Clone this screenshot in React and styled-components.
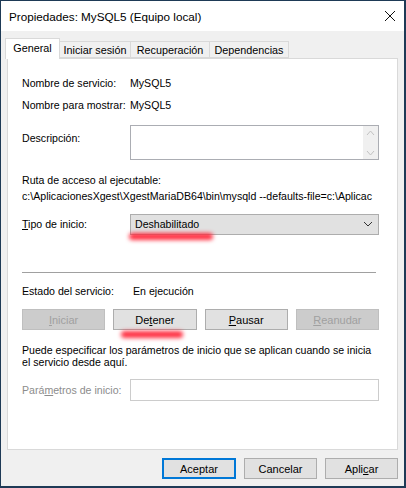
import React from "react";
import styled, { createGlobalStyle } from "styled-components";

const Global = createGlobalStyle`
  html, body { margin: 0; padding: 0; background: #1e3a56; }
  body { font-family: "Liberation Sans", Arial, sans-serif; font-size: 10.6px; color: #000; }
`;

const Window = styled.div`
  position: relative;
  width: 406px;
  height: 488px;
  box-sizing: border-box;
  border: 1px solid #1e3a56;
  border-right-width: 2px;
  border-bottom-width: 2px;
  background: #f0f0f0;
  display: flex;
  flex-direction: column;
`;

const TitleBar = styled.div`
  height: 30px;
  flex: 0 0 30px;
  background: #fff;
  display: flex;
  align-items: center;
  justify-content: space-between;
  padding: 0 8px 0 8px;
  font-size: 11.7px;
`;

const CloseIcon = () => (
  <svg width="12" height="12" viewBox="0 0 12 12">
    <path d="M1 1 L11 11 M11 1 L1 11" stroke="#111" strokeWidth="1" />
  </svg>
);

const Body = styled.div`
  flex: 1;
  display: flex;
  flex-direction: column;
  padding: 7px 6px 0 6px;
`;

const TabBar = styled.div`
  display: flex;
  align-items: flex-end;
  height: 20px;
  position: relative;
  z-index: 2;
`;

const Tab = styled.div`
  box-sizing: border-box;
  width: ${(p) => p.$w}px;
  height: ${(p) => (p.$active ? 21 : 17)}px;
  margin: ${(p) => (p.$active ? "0 0 -1px -2px" : "0 0 0 -1px")};
  border: 1px solid #d9d9d9;
  border-bottom: ${(p) => (p.$active ? "none" : "1px solid #d9d9d9")};
  background: ${(p) => (p.$active ? "#fff" : "#f0f0f0")};
  display: flex;
  align-items: center;
  justify-content: center;
  font-size: 10.8px;
  white-space: nowrap;
  padding-bottom: ${(p) => (p.$active ? 2 : 0)}px;
`;

const Panel = styled.div`
  box-sizing: border-box;
  height: 392px;
  background: #fff;
  border: 1px solid #d9d9d9;
  padding: 13px 18px 0 14px;
  display: flex;
  flex-direction: column;
  position: relative;
  z-index: 1;
`;

const InfoRow = styled.div`
  display: grid;
  grid-template-columns: 108px minmax(0, 1fr);
  align-items: ${(p) => p.$align || "center"};
  min-height: ${(p) => p.$h || 22}px;
  margin-top: ${(p) => p.$mt || 0}px;
  color: ${(p) => (p.$muted ? "#8c8c8c" : "inherit")};
`;

const Label = styled.div`
  padding-top: ${(p) => p.$pt || 0}px;
  white-space: nowrap;
  overflow: visible;
`;

const Value = styled.div`
  padding-left: ${(p) => p.$pl || 0}px;
  white-space: nowrap;
`;

const TextArea = styled.div`
  box-sizing: border-box;
  height: 35px;
  border: 1px solid #abadb3;
  background: #fff;
  display: flex;
  justify-content: flex-end;
`;

const ScrollBar = styled.div`
  width: 15px;
  background: #f0f0f0;
  display: flex;
  flex-direction: column;
  align-items: center;
  justify-content: space-between;
  padding: 4px 0 3px;
`;

const Arrow = ({ up }) => (
  <svg width="9" height="6" viewBox="0 0 9 6">
    <path d={up ? "M1 5 L4.5 1 L8 5" : "M1 1 L4.5 5 L8 1"} stroke="#c2c2c2" fill="none" strokeWidth="1" />
  </svg>
);

const Block = styled.div`
  margin-top: ${(p) => p.$mt || 0}px;
  line-height: ${(p) => p.$lh || 16}px;
  white-space: nowrap;
  overflow: hidden;
`;

const Select = styled.div`
  box-sizing: border-box;
  height: 21px;
  background: #e1e1e1;
  border: 1px solid #adadad;
  display: flex;
  align-items: center;
  justify-content: space-between;
  padding: 0 5px 0 4px;
`;

const Separator = styled.div`
  height: 1px;
  background: #a0a0a0;
  margin: 37px 3px 0 0;
`;

const ButtonRow = styled.div`
  display: grid;
  grid-template-columns: repeat(4, 1fr);
  gap: 8px;
  margin-top: 10px;
`;

const Button = styled.div`
  box-sizing: border-box;
  height: 21px;
  display: flex;
  align-items: center;
  justify-content: center;
  background: ${(p) => (p.$disabled ? "#cccccc" : "#e1e1e1")};
  border: ${(p) => (p.$default ? "2px solid #0078d7" : p.$disabled ? "1px solid #bfbfbf" : "1px solid #adadad")};
  color: ${(p) => (p.$disabled ? "#a0a0a0" : "#000")};
  width: ${(p) => (p.$w ? p.$w + "px" : "auto")};
  font-size: 11px;
`;

const Input = styled.div`
  box-sizing: border-box;
  height: 22px;
  border: 1px solid #cccccc;
  background: #fff;
`;

const Footer = styled.div`
  display: flex;
  justify-content: flex-end;
  gap: 8px;
  margin-top: 8px;
`;

const Mark = styled.div`
  position: absolute;
  left: ${(p) => p.$x}px;
  top: ${(p) => p.$y}px;
  width: ${(p) => p.$w}px;
  height: 7px;
  border-radius: 4px;
  background: rgba(255, 30, 50, 0.92);
  filter: blur(2.3px);
  z-index: 5;
  pointer-events: none;
`;

const Chevron = () => (
  <svg width="10" height="6" viewBox="0 0 10 6">
    <path d="M1 1 L5 5 L9 1" stroke="#333" fill="none" strokeWidth="1" />
  </svg>
);

export default function App() {
  return (
    <>
      <Global />
      <Window>
        <TitleBar>
          <span>Propiedades: MySQL5 (Equipo local)</span>
          <CloseIcon />
        </TitleBar>
        <Body>
          <TabBar>
            <Tab $active $w={55}>General</Tab>
            <Tab $w={72}>Iniciar sesión</Tab>
            <Tab $w={80}>Recuperación</Tab>
            <Tab $w={80}>Dependencias</Tab>
          </TabBar>
          <Panel>
            <InfoRow>
              <Label>Nombre de servicio:</Label>
              <Value>MySQL5</Value>
            </InfoRow>
            <InfoRow>
              <Label>Nombre para mostrar:</Label>
              <Value>MySQL5</Value>
            </InfoRow>
            <InfoRow $align="start" $mt={9}>
              <Label $pt={7}>Descripción:</Label>
              <TextArea>
                <ScrollBar>
                  <Arrow up />
                  <Arrow />
                </ScrollBar>
              </TextArea>
            </InfoRow>
            <Block $mt={12}>
              Ruta de acceso al ejecutable:
              <br />
              c:\AplicacionesXgest\XgestMariaDB64\bin\mysqld --defaults-file=c:\Aplicac
            </Block>
            <InfoRow $mt={9}>
              <Label>
                <u>T</u>ipo de inicio:
              </Label>
              <Select>
                <span>Deshabilitado</span>
                <Chevron />
              </Select>
            </InfoRow>
            <Separator />
            <InfoRow $mt={10} $h={16}>
              <Label>Estado del servicio:</Label>
              <Value $pl={3}>En ejecución</Value>
            </InfoRow>
            <ButtonRow>
              <Button $disabled>
                <u>I</u>niciar
              </Button>
              <Button>
                De<u>t</u>ener
              </Button>
              <Button>
                <u>P</u>ausar
              </Button>
              <Button $disabled>
                <u>R</u>eanudar
              </Button>
            </ButtonRow>
            <Block $mt={14} $lh={12}>
              Puede especificar los parámetros de inicio que se aplican cuando se inicia
              <br />
              el servicio desde aquí.
            </Block>
            <InfoRow $mt={11} $muted>
              <Label>
                Pará<u>m</u>etros de inicio:
              </Label>
              <Input />
            </InfoRow>
          </Panel>
          <Footer>
            <Button $default $w={74}>Aceptar</Button>
            <Button $w={73}>Cancelar</Button>
            <Button $w={73}>
              Apli<u>c</u>ar
            </Button>
          </Footer>
        </Body>
        <Mark $x={128} $y={232} $w={84} />
        <Mark $x={120} $y={330} $w={62} />
      </Window>
    </>
  );
}
